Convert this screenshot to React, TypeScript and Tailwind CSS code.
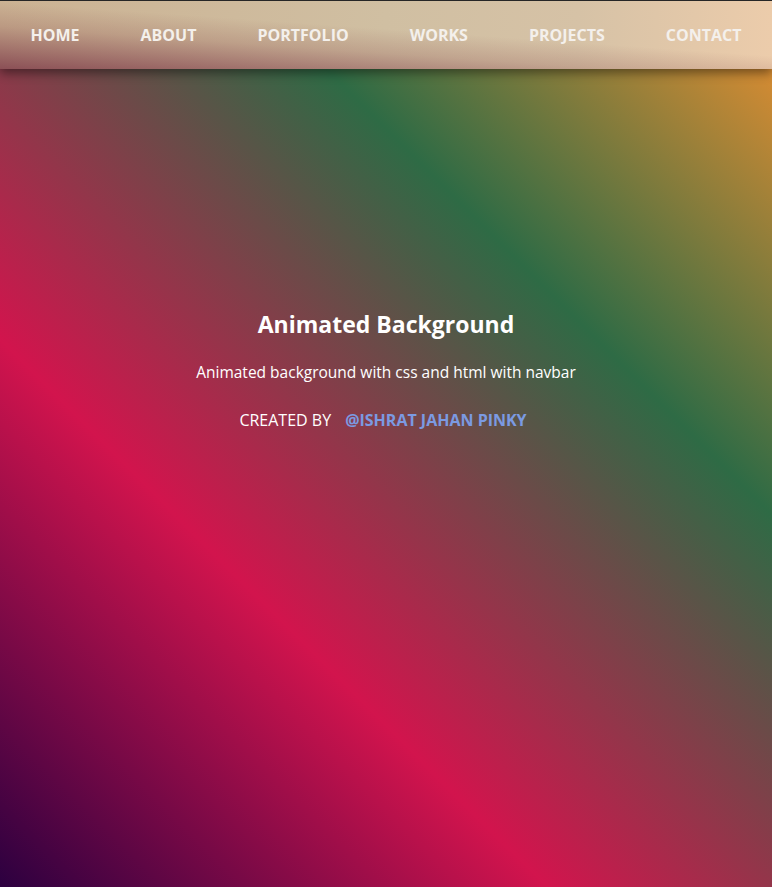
import React from 'react';

const links = ['Home', 'About', 'Portfolio', 'Works', 'Projects', 'Contact'];

const Navbar = () => {
  return (
    <nav className="relative z-10 h-[69px] w-full border-t border-[#262626] bg-[linear-gradient(4deg,rgba(112,38,60,0.7)_0%,rgba(140,80,80,0.25)_35%,transparent_55%),linear-gradient(to_right,#cbb293,#d0bfa2_50%,#d6c2a6_75%,#ecccab)] shadow-[0_4px_10px_rgba(0,0,0,0.45)]">
      <ul className="flex h-full items-center justify-center gap-[61px]">
        {links.map((link) => (
          <li key={link}>
            <a href="#" className="text-base font-bold uppercase text-[#f4f0ec]">
              {link}
            </a>
          </li>
        ))}
      </ul>
    </nav>
  );
};

const App = () => {
  return (
    <div
      className="flex h-[887px] w-full flex-col overflow-hidden bg-[linear-gradient(45deg,#2c0040_0%,#d2144d_33%,#2e6b45_69%,#ee9030_100%)]"
      style={{ fontFamily: '"Open Sans", "Noto Sans", sans-serif' }}
    >
      <Navbar />
      <main className="flex flex-col items-center pt-[240px] text-center text-white">
        <h1 className="text-[23px] font-bold leading-[30px]">Animated Background</h1>
        <p className="mt-[22px] text-[15.5px] leading-[22px]">
          Animated background with css and html with navbar
        </p>
        <p className="mt-[26px] pr-[6px] text-[16px] leading-[22px]">
          CREATED BY
          <a href="#" className="ml-[14px] font-bold text-[#7b9ae2]">
            @ISHRAT JAHAN PINKY
          </a>
        </p>
      </main>
    </div>
  );
};

export default App;
